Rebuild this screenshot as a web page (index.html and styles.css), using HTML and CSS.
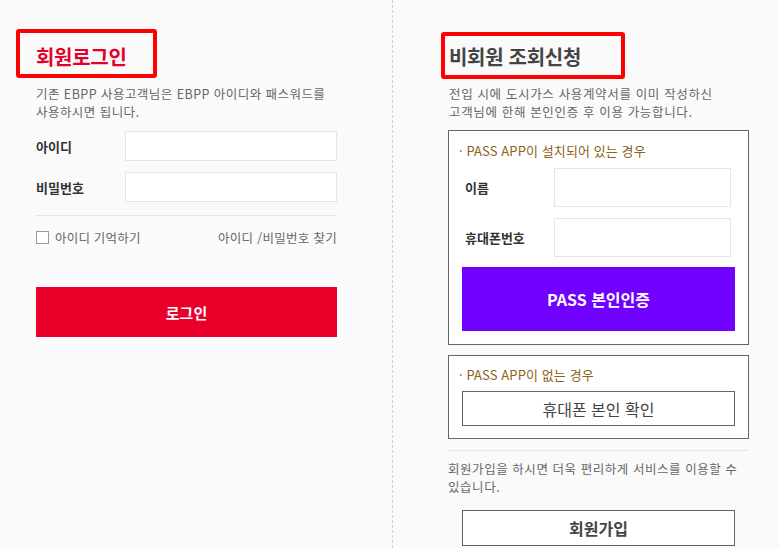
FILE: index.html
```html
<!DOCTYPE html>
<html lang="ko">
<head>
<meta charset="utf-8">
<title>로그인</title>
<link rel="stylesheet" href="styles.css">
</head>
<body>
<div class="page">
  <section class="col col-left">
    <h2 class="title title-red">회원로그인<span class="mark mark-left"></span></h2>
    <p class="desc">기존 EBPP 사용고객님은 EBPP 아이디와 패스워드를<br>사용하시면 됩니다.</p>
    <div class="login-form">
      <div class="row">
        <label class="lbl">아이디</label>
        <div class="input input-sm"></div>
      </div>
      <div class="row">
        <label class="lbl">비밀번호</label>
        <div class="input input-sm"></div>
      </div>
    </div>
    <div class="sep"></div>
    <div class="opts">
      <span class="remember"><span class="check"></span>아이디 기억하기</span>
      <span class="find">아이디 /비밀번호 찾기</span>
    </div>
    <div class="btn-login">로그인</div>
  </section>
  <section class="col col-right">
    <h2 class="title title-dark">비회원 조회신청<span class="mark mark-right"></span></h2>
    <p class="desc">전입 시에 도시가스 사용계약서를 이미 작성하신<br>고객님에 한해 본인인증 후 이용 가능합니다.</p>
    <div class="box box-pass">
      <p class="box-title">· PASS APP이 설치되어 있는 경우</p>
      <div class="pass-form">
        <div class="row">
          <label class="lbl">이름</label>
          <div class="input input-lg"></div>
        </div>
        <div class="row">
          <label class="lbl">휴대폰번호</label>
          <div class="input input-lg"></div>
        </div>
      </div>
      <div class="btn-pass">PASS 본인인증</div>
    </div>
    <div class="box box-phone">
      <p class="box-title">· PASS APP이 없는 경우</p>
      <div class="btn-outline btn-phone">휴대폰 본인 확인</div>
    </div>
    <div class="sep sep-right"></div>
    <p class="desc desc-join">회원가입을 하시면 더욱 편리하게 서비스를 이용할 수<br>있습니다.</p>
    <div class="btn-outline btn-join">회원가입</div>
  </section>
</div>
</body>
</html>
```

FILE: styles.css
```css
* { box-sizing: border-box; }
html, body { margin: 0; padding: 0; }
body {
  background: #fafafa;
  font-family: "Noto Sans CJK KR", "Noto Sans", sans-serif;
  color: #333;
}
.page {
  display: flex;
  width: 779px;
  height: 548px;
  overflow: hidden;
}
.col {
  display: flex;
  flex-direction: column;
  padding-top: 43px;
}
.col-left {
  width: 393px;
  padding-left: 36px;
  padding-right: 55px;
  border-right: 1px dashed #d0d0d0;
}
.col-right {
  width: 386px;
  padding-left: 55px;
  padding-right: 30px;
}
.title {
  position: relative;
  margin: 0;
  font-size: 20px;
  line-height: 28px;
  font-weight: 700;
  letter-spacing: -0.3px;
}
.title-red { color: #e4002b; }
.title-dark { color: #444; margin-left: 1px; }
.mark {
  position: absolute;
  border: 4px solid #ff0000;
  border-radius: 3px;
}
.mark-left { left: -20px; top: -14px; width: 141px; height: 49px; }
.mark-right { left: -8px; top: -11px; width: 184px; height: 47px; }
.desc {
  margin: 14px 0 0;
  font-size: 12.5px;
  line-height: 18px;
  color: #666;
  letter-spacing: 0.45px;
  white-space: nowrap;
}
.col-right .desc { margin-left: 1px; letter-spacing: 0.65px; }
.login-form {
  display: flex;
  flex-direction: column;
  gap: 11px;
  margin-top: 10px;
}
.row {
  display: flex;
  align-items: center;
  justify-content: space-between;
}
.lbl {
  font-size: 13px;
  font-weight: 700;
  color: #333;
}
.input {
  background: #fff;
  border: 1px solid #e5e5e5;
}
.input-sm { width: 212px; height: 30px; }
.input-lg { width: 177px; height: 39px; }
.sep {
  height: 1px;
  background: #e6e6e6;
  margin-top: 13px;
}
.opts {
  display: flex;
  justify-content: space-between;
  align-items: center;
  margin-top: 11px;
  height: 20px;
  font-size: 12.5px;
  color: #666;
}
.find { letter-spacing: 0.3px; }
.remember { display: flex; align-items: center; letter-spacing: 0.2px; }
.check {
  width: 13px;
  height: 13px;
  border: 1px solid #999;
  background: #fff;
  margin-right: 6px;
}
.btn-login {
  margin-top: 40px;
  height: 50px;
  background: #e8002a;
  color: #fff;
  font-size: 15px;
  font-weight: 700;
  display: flex;
  align-items: center;
  justify-content: center;
}
.box {
  background: #fff;
  border: 1px solid #666;
  width: 301px;
}
.box-pass {
  margin-top: 9px;
  padding: 10px 13px 13px;
}
.box-title {
  margin: 0 0 0 -3px;
  font-size: 13px;
  line-height: 19px;
  color: #8a6218;
  letter-spacing: 0.1px;
}
.pass-form {
  display: flex;
  flex-direction: column;
  gap: 11px;
  margin-top: 8px;
  padding: 0 4px 0 3px;
}
.btn-pass {
  margin-top: 10px;
  height: 64px;
  background: #7000ff;
  color: #fff;
  font-size: 16px;
  font-weight: 700;
  display: flex;
  align-items: center;
  justify-content: center;
}
.box-phone {
  margin-top: 10px;
  padding: 9px 13px 12px;
}
.btn-outline {
  border: 1px solid #666;
  background: #fff;
  color: #444;
  display: flex;
  align-items: center;
  justify-content: center;
  font-size: 16px;
}
.btn-phone {
  margin-top: 7px;
  height: 35px;
}
.sep-right {
  margin-top: 11px;
  width: 301px;
}
.col-right .desc-join {
  margin-top: 9px;
  margin-left: 0;
  width: 301px;
  letter-spacing: 0.55px;
}
.btn-join {
  margin-top: 14px;
  margin-left: 14px;
  width: 273px;
  height: 36px;
  font-weight: 700;
}
```
